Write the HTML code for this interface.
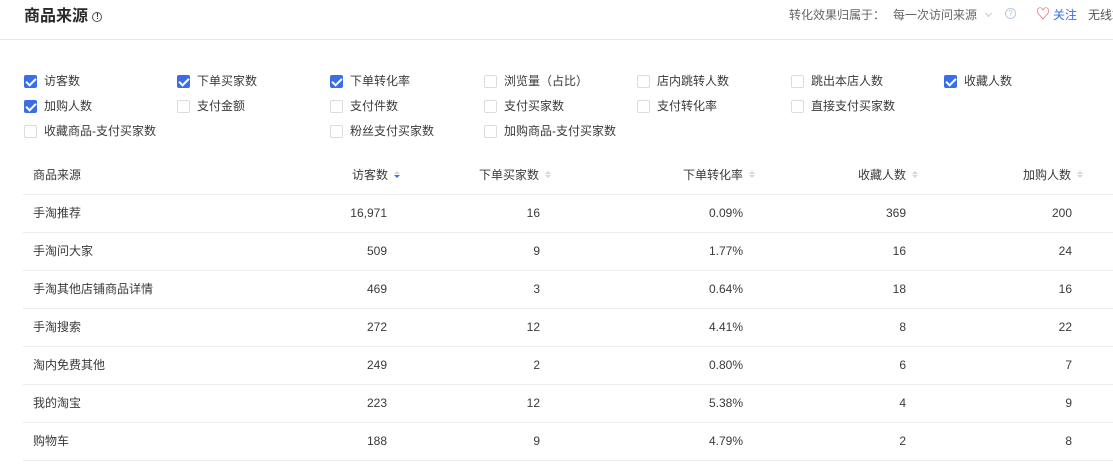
<!DOCTYPE html>
<html><head><meta charset="utf-8"><style>
*{margin:0;padding:0;box-sizing:border-box}
body{width:1113px;height:465px;overflow:hidden;background:#fff;font-family:"Liberation Sans","Noto Sans CJK SC",sans-serif;font-size:12px;color:#3a3a3a;position:relative}
.a{position:absolute;white-space:nowrap;line-height:16px}
.cb{position:absolute;width:13px;height:13px;border:1px solid #dcdcdc;border-radius:2px;background:#fff}
.cb.on{background:#3a6ee8;border-color:#3a6ee8}
.cb.on::after{content:"";position:absolute;left:3px;top:0px;width:4px;height:8px;border:solid #fff;border-width:0 2px 2px 0;transform:rotate(45deg)}
.ln{position:absolute;left:23px;right:0;height:1px;background:#ececec}
.r{text-align:right}
.sort{display:inline-block;width:6px;margin-left:6px;vertical-align:middle;position:relative;top:-1px}
.sort i{display:block;width:0;height:0;border-left:3px solid transparent;border-right:3px solid transparent}
.sort i.u{border-bottom:3px solid #d6d6d6;margin-bottom:1px}
.sort i.d{border-top:3px solid #d6d6d6}
.sort i.d.b{border-top-color:#3a6ee8}
</style></head><body>
<div class="a" style="left:24px;top:7px;font-size:16px;font-weight:bold;line-height:20px;color:#2a2a2a">商品来源 <span style="display:inline-block;width:10px;height:10px;border:1px solid #555;border-radius:50%;font-size:8px;line-height:8px;text-align:center;vertical-align:2px;font-weight:bold">!</span></div>
<div class="a" style="left:789px;top:7px;color:#666">转化效果归属于：</div>
<div class="a" style="left:893px;top:7px;color:#666">每一次访问来源</div>
<div style="position:absolute;left:986px;top:11px;width:5px;height:5px;border:solid #c8c8c8;border-width:0 1px 1px 0;transform:rotate(45deg)"></div>
<div class="a" style="left:1005px;top:8px;width:11px;height:11px;border:1px solid #b9c8e6;border-radius:50%;font-size:8px;line-height:9px;text-align:center;color:#b9c8e6">?</div>
<div class="a" style="left:1036px;top:6px;color:#e0435a;font-size:14px">♡</div>
<div class="a" style="left:1053px;top:7px;color:#3a6ee8">关注</div>
<div class="a" style="left:1088px;top:7px;color:#555">无线端</div>
<div class="ln" style="left:0;top:39px;background:#e8e8e8"></div>

<div class="cb on" style="left:24px;top:75px"></div><div class="a" style="left:44px;top:73px">访客数</div>
<div class="cb on" style="left:177px;top:75px"></div><div class="a" style="left:197px;top:73px">下单买家数</div>
<div class="cb on" style="left:330px;top:75px"></div><div class="a" style="left:350px;top:73px">下单转化率</div>
<div class="cb" style="left:484px;top:75px"></div><div class="a" style="left:504px;top:73px">浏览量（占比）</div>
<div class="cb" style="left:637px;top:75px"></div><div class="a" style="left:657px;top:73px">店内跳转人数</div>
<div class="cb" style="left:791px;top:75px"></div><div class="a" style="left:811px;top:73px">跳出本店人数</div>
<div class="cb on" style="left:944px;top:75px"></div><div class="a" style="left:964px;top:73px">收藏人数</div>

<div class="cb on" style="left:24px;top:100px"></div><div class="a" style="left:44px;top:98px">加购人数</div>
<div class="cb" style="left:177px;top:100px"></div><div class="a" style="left:197px;top:98px">支付金额</div>
<div class="cb" style="left:330px;top:100px"></div><div class="a" style="left:350px;top:98px">支付件数</div>
<div class="cb" style="left:484px;top:100px"></div><div class="a" style="left:504px;top:98px">支付买家数</div>
<div class="cb" style="left:637px;top:100px"></div><div class="a" style="left:657px;top:98px">支付转化率</div>
<div class="cb" style="left:791px;top:100px"></div><div class="a" style="left:811px;top:98px">直接支付买家数</div>

<div class="cb" style="left:24px;top:125px"></div><div class="a" style="left:44px;top:123px">收藏商品-支付买家数</div>
<div class="cb" style="left:330px;top:125px"></div><div class="a" style="left:350px;top:123px">粉丝支付买家数</div>
<div class="cb" style="left:484px;top:125px"></div><div class="a" style="left:504px;top:123px">加购商品-支付买家数</div>

<div class="a" style="left:33px;top:167px">商品来源</div>
<div class="a r" style="right:713px;top:167px">访客数<span class="sort"><i class="u"></i><i class="d b"></i></span></div>
<div class="a r" style="right:562px;top:167px">下单买家数<span class="sort"><i class="u"></i><i class="d"></i></span></div>
<div class="a r" style="right:358px;top:167px">下单转化率<span class="sort"><i class="u"></i><i class="d"></i></span></div>
<div class="a r" style="right:195px;top:167px">收藏人数<span class="sort"><i class="u"></i><i class="d"></i></span></div>
<div class="a r" style="right:30px;top:167px">加购人数<span class="sort"><i class="u"></i><i class="d"></i></span></div>

<div class="ln" style="top:194px"></div>
<div class="ln" style="top:232px"></div>
<div class="ln" style="top:270px"></div>
<div class="ln" style="top:308px"></div>
<div class="ln" style="top:346px"></div>
<div class="ln" style="top:384px"></div>
<div class="ln" style="top:422px"></div>
<div class="ln" style="top:460px"></div>

<div style="position:absolute;left:0;top:205px;width:1113px">
<div class="a" style="left:33px;top:0">手淘推荐</div><div class="a r" style="right:726px;top:0">16,971</div><div class="a r" style="right:573px;top:0">16</div><div class="a r" style="right:370px;top:0">0.09%</div><div class="a r" style="right:207px;top:0">369</div><div class="a r" style="right:41px;top:0">200</div>
<div class="a" style="left:33px;top:38px">手淘问大家</div><div class="a r" style="right:726px;top:38px">509</div><div class="a r" style="right:573px;top:38px">9</div><div class="a r" style="right:370px;top:38px">1.77%</div><div class="a r" style="right:207px;top:38px">16</div><div class="a r" style="right:41px;top:38px">24</div>
<div class="a" style="left:33px;top:76px">手淘其他店铺商品详情</div><div class="a r" style="right:726px;top:76px">469</div><div class="a r" style="right:573px;top:76px">3</div><div class="a r" style="right:370px;top:76px">0.64%</div><div class="a r" style="right:207px;top:76px">18</div><div class="a r" style="right:41px;top:76px">16</div>
<div class="a" style="left:33px;top:114px">手淘搜索</div><div class="a r" style="right:726px;top:114px">272</div><div class="a r" style="right:573px;top:114px">12</div><div class="a r" style="right:370px;top:114px">4.41%</div><div class="a r" style="right:207px;top:114px">8</div><div class="a r" style="right:41px;top:114px">22</div>
<div class="a" style="left:33px;top:152px">淘内免费其他</div><div class="a r" style="right:726px;top:152px">249</div><div class="a r" style="right:573px;top:152px">2</div><div class="a r" style="right:370px;top:152px">0.80%</div><div class="a r" style="right:207px;top:152px">6</div><div class="a r" style="right:41px;top:152px">7</div>
<div class="a" style="left:33px;top:190px">我的淘宝</div><div class="a r" style="right:726px;top:190px">223</div><div class="a r" style="right:573px;top:190px">12</div><div class="a r" style="right:370px;top:190px">5.38%</div><div class="a r" style="right:207px;top:190px">4</div><div class="a r" style="right:41px;top:190px">9</div>
<div class="a" style="left:33px;top:228px">购物车</div><div class="a r" style="right:726px;top:228px">188</div><div class="a r" style="right:573px;top:228px">9</div><div class="a r" style="right:370px;top:228px">4.79%</div><div class="a r" style="right:207px;top:228px">2</div><div class="a r" style="right:41px;top:228px">8</div>
</div>
</body></html>
